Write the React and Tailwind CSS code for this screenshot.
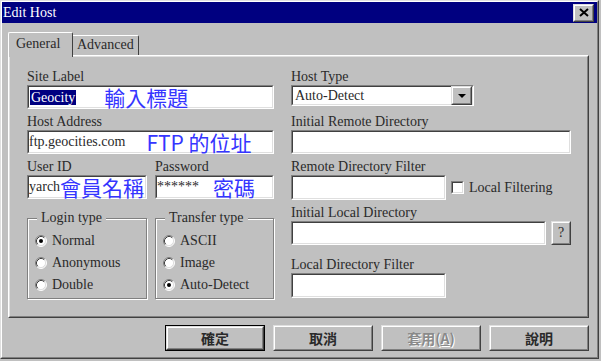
import React from "react";

const CJK = "font-['Noto_Sans_CJK_TC','Noto_Sans_CJK_SC',sans-serif]";

function Sunken({ className = "", inner = "", children }) {
  return (
    <div className={"border border-t-[#808080] border-l-[#808080] border-r-white border-b-white " + className}>
      <div className={"h-full border border-t-[#404040] border-l-[#404040] border-r-[#dfdfdf] border-b-[#dfdfdf] bg-white flex items-center whitespace-nowrap " + inner}>
        {children}
      </div>
    </div>
  );
}

function Raised({ className = "", inner = "", children }) {
  return (
    <div className={"border border-t-[#dfdfdf] border-l-[#dfdfdf] border-r-[#404040] border-b-[#404040] " + className}>
      <div className={"h-full border border-t-white border-l-white border-r-[#808080] border-b-[#808080] bg-[#c0c0c0] flex items-center justify-center " + inner}>
        {children}
      </div>
    </div>
  );
}

function Radio({ checked }) {
  return (
    <svg width="12" height="12" viewBox="0 0 12 12" className="shrink-0">
      <circle cx="6" cy="6" r="5" fill="#fff" />
      <path d="M2.11 9.89A5.5 5.5 0 0 1 9.89 2.11" stroke="#808080" fill="none" />
      <path d="M9.89 2.11A5.5 5.5 0 0 1 2.11 9.89" stroke="#fff" fill="none" />
      <path d="M2.82 9.18A4.5 4.5 0 0 1 9.18 2.82" stroke="#404040" fill="none" />
      <path d="M9.18 2.82A4.5 4.5 0 0 1 2.82 9.18" stroke="#dfdfdf" fill="none" />
      {checked && <circle cx="6" cy="6" r="2" fill="#000" />}
    </svg>
  );
}

function Label({ children, className = "" }) {
  return <div className={"h-[16px] leading-[16px] whitespace-nowrap " + className}>{children}</div>;
}

function Note({ children, className = "" }) {
  return (
    <span className={CJK + " text-[21px] leading-[20px] text-[#3535ff] " + className}>
      {children}
    </span>
  );
}

function Group({ title, items, className = "" }) {
  return (
    <div className={"relative h-[81px] border border-[#808080] shadow-[inset_1px_1px_0_#fff,1px_1px_0_#fff] pt-[11px] pl-[7px] " + className}>
      <span className="absolute left-[9px] top-[-9px] px-[4px] bg-[#c0c0c0] leading-[16px] whitespace-nowrap">{title}</span>
      {items.map((it) => (
        <div key={it.label} className="h-[22px] flex items-center gap-[5px] whitespace-nowrap">
          <Radio checked={it.checked} />
          <span className="leading-[16px]">{it.label}</span>
        </div>
      ))}
    </div>
  );
}

function Btn({ children, def = false, disabled = false }) {
  const body = (
    <Raised className="w-full h-full">
      <span
        className={
          CJK +
          " text-[14px] leading-none font-bold " +
          (disabled ? "text-[#8a8a8a] [text-shadow:1px_1px_0_#fff]" : "text-[#2a2a2a]")
        }
      >
        {children}
      </span>
    </Raised>
  );
  if (def) {
    return <div className="w-[100px] h-[26px] border border-black">{body}</div>;
  }
  return <div className="w-[100px] h-[26px]">{body}</div>;
}

export default function App() {
  return (
    <div className="w-[601px] h-[361px] bg-[#c0c0c0] overflow-hidden font-['Liberation_Serif','Times_New_Roman',serif] text-[14px] text-[#2a2a2a]">
      <div className="w-[599px] h-[359px] border border-t-[#dfdfdf] border-l-[#dfdfdf] border-r-[#404040] border-b-[#404040]">
        <div className="h-full border border-t-white border-l-white border-r-[#808080] border-b-[#808080] flex flex-col">
          {/* Title bar */}
          <div className="h-[21px] bg-[#000080] flex items-center justify-between pl-[1px] pr-[3px]">
            <span className="text-white text-[14px] leading-none">Edit Host</span>
            <Raised className="w-[21px] h-[18px]">
              <svg width="10" height="9" viewBox="0 0 10 9">
                <path d="M1 1L9 8M9 1L1 8" stroke="#000" strokeWidth="2" />
              </svg>
            </Raised>
          </div>

          <div className="pl-[6px] pt-[9px]">
            {/* Tabs */}
            <div className="flex items-end h-[23px] relative z-10">
              <div className="w-[65px] h-[25px] mb-[-2px] bg-[#c0c0c0] border-t border-l border-r border-t-white border-l-white border-r-[#404040] rounded-t-[2px] pl-[7px] pt-[3px] leading-[16px]">
                General
              </div>
              <div className="w-[66px] h-[20px] bg-[#c0c0c0] border-t border-r border-t-white border-r-[#404040] rounded-tr-[2px] pl-[4px] pt-[1px] leading-[16px]">
                Advanced
              </div>
            </div>

            {/* Panel */}
            <div className="w-[581px] h-[263px] border border-t-white border-l-white border-r-[#404040] border-b-[#404040]">
              <div className="h-full border border-t-[#dfdfdf] border-l-[#dfdfdf] border-r-[#808080] border-b-[#808080] pl-[17px] pt-[12px] flex gap-[17px]">
                {/* Left column */}
                <div className="w-[247px] flex flex-col">
                  <Label>Site Label</Label>
                  <Sunken className="h-[24px]" inner="pl-[1px]">
                    <span className="bg-[#000080] text-white px-[1px] leading-[15px]">Geocity</span>
                    <Note className="ml-[28px]">輸入標題</Note>
                  </Sunken>

                  <Label className="mt-[5px]">Host Address</Label>
                  <Sunken className="h-[24px]">
                    <span className="leading-[16px]">ftp.geocities.com</span>
                    <Note className="ml-[21px]">FTP 的位址</Note>
                  </Sunken>

                  <div className="mt-[5px] flex gap-[8px]">
                    <div className="w-[120px] flex flex-col">
                      <Label>User ID</Label>
                      <Sunken className="h-[24px]">
                        <span className="leading-[16px]">yarch</span>
                        <Note>會員名稱</Note>
                      </Sunken>
                    </div>
                    <div className="w-[119px] flex flex-col">
                      <Label>Password</Label>
                      <Sunken className="h-[24px]">
                        <span className="leading-[16px]">******</span>
                        <Note className="ml-[14px]">密碼</Note>
                      </Sunken>
                    </div>
                  </div>

                  <div className="mt-[19px] flex gap-[8px]">
                    <Group
                      className="w-[120px]"
                      title="Login type"
                      items={[
                        { label: "Normal", checked: true },
                        { label: "Anonymous" },
                        { label: "Double" },
                      ]}
                    />
                    <Group
                      className="w-[119px]"
                      title="Transfer type"
                      items={[
                        { label: "ASCII" },
                        { label: "Image" },
                        { label: "Auto-Detect", checked: true },
                      ]}
                    />
                  </div>
                </div>

                {/* Right column */}
                <div className="w-[280px] flex flex-col">
                  <Label>Host Type</Label>
                  <Sunken className="w-[183px] h-[21px]" inner="pl-[2px] justify-between">
                    <span className="leading-[16px]">Auto-Detect</span>
                    <Raised className="w-[21px] h-[19px]">
                      <svg width="8" height="4" viewBox="0 0 8 4">
                        <polygon points="0,0 8,0 4,4" fill="#000" />
                      </svg>
                    </Raised>
                  </Sunken>

                  <Label className="mt-[8px]">Initial Remote Directory</Label>
                  <Sunken className="h-[24px]" />

                  <Label className="mt-[5px]">Remote Directory Filter</Label>
                  <div className="flex items-center">
                    <Sunken className="w-[155px] h-[25px]" />
                    <Sunken className="w-[13px] h-[13px] ml-[5px]" />
                    <span className="ml-[5px] leading-[16px] whitespace-nowrap">Local Filtering</span>
                  </div>

                  <Label className="mt-[5px]">Initial Local Directory</Label>
                  <div className="flex items-center">
                    <Sunken className="w-[255px] h-[24px]" />
                    <Raised className="w-[20px] h-[24px] ml-[5px]">
                      <span className="leading-none">?</span>
                    </Raised>
                  </div>

                  <Label className="mt-[12px]">Local Directory Filter</Label>
                  <Sunken className="w-[155px] h-[25px]" />
                </div>
              </div>
            </div>

            {/* Buttons */}
            <div className="w-[581px] mt-[7px] flex justify-end gap-[8px]">
              <Btn def>確定</Btn>
              <Btn>取消</Btn>
              <Btn disabled>
                套用(<span className="underline">A</span>)
              </Btn>
              <Btn>說明</Btn>
            </div>
          </div>
        </div>
      </div>
    </div>
  );
}
